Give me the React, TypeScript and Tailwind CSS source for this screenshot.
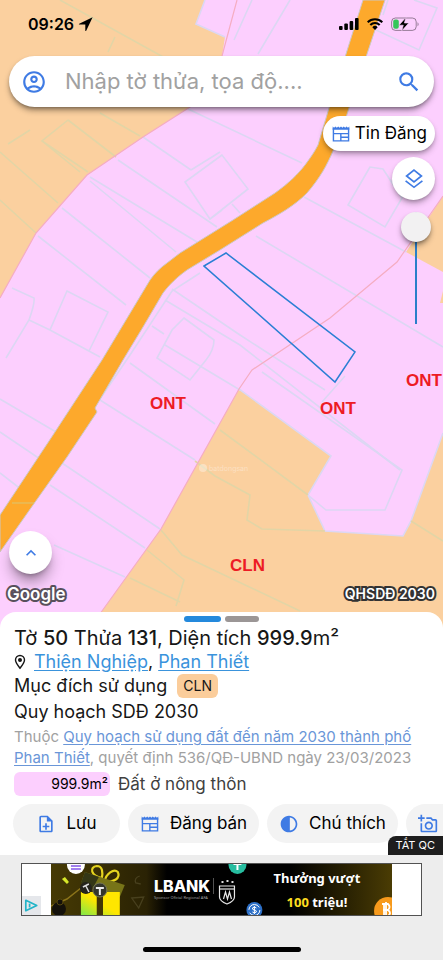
import { useState } from "react";
import {
  MdContrast,
  MdKeyboardArrowUp,
  MdOutlineAccountCircle,
  MdOutlineAddAPhoto,
  MdOutlineNoteAdd,
  MdSearch,
} from "react-icons/md";

function NewsIcon({ className }: { className?: string }) {
  return (
    <svg className={className} viewBox="0 0 24 24" fill="none" stroke="currentColor" strokeWidth={1.7} aria-hidden="true">
      <path
        d="M2 3l1.67 1.5L5.33 3 7 4.5 8.67 3l1.66 1.5L12 3l1.67 1.500L15.33 3 17 4.500 18.670 3l1.660 1.500L22 3v4H2z"
        fill="currentColor"
        stroke="none"
      />
      <path d="M2.900 5v15.200h18.200V5M3 11.500h18M11.800 11.500V20M11.800 15.800H21" />
    </svg>
  );
}

function LayersIcon() {
  return (
    <svg className="size-6" viewBox="0 0 24 24" fill="none" stroke="currentColor" strokeWidth={1.7} aria-hidden="true">
      <path d="M12 3.200l7.400 5.800-7.400 5.800L4.600 9z" />
      <path d="M3.600 13.800l8.400 6.500 8.400-6.500" />
    </svg>
  );
}

function StatusBar() {
  return (
    <div className="flex items-center justify-between pt-3 pr-6 pl-7">
      <div className="flex items-center gap-1 text-base font-semibold text-black">
        <span>09:26</span>
        <svg className="size-4" viewBox="0 0 16 16" aria-label="Location">
          <path d="M14.6 1.2L1.2 7.8c-.5.3-.4.8.2.8h5.9v6c0 .6.6.7.9.2z" />
        </svg>
      </div>
      <div className="flex items-center gap-2">
        <svg className="h-3 w-5" viewBox="0 0 20 12" aria-label="Signal">
          <rect x="0" y="8" width="3.6" height="4" rx="1" />
          <rect x="5.3" y="5.6" width="3.6" height="6.4" rx="1" />
          <rect x="10.6" y="3" width="3.6" height="9" rx="1" />
          <rect x="16" y="0" width="3.6" height="12" rx="1" />
        </svg>
        <svg className="h-3 w-4" viewBox="0 0 16 12" aria-label="Wi-Fi">
          <g fill="none" stroke="#000" strokeWidth="2">
            <path d="M.7 4.3a10.4 10.4 0 0 1 14.6 0" />
            <path d="M3.3 7a6.6 6.6 0 0 1 9.4 0" />
          </g>
          <path d="M8 12L5.3 9.2a3.8 3.8 0 0 1 5.4 0z" />
        </svg>
        <svg className="h-4 w-7" viewBox="0 0 28 16" aria-label="Battery">
          <rect x=".6" y="2" width="24.6" height="12.4" rx="3.8" fill="none" stroke="#000" strokeOpacity=".4" />
          <path d="M26.6 6.2c1.2.5 1.2 3.5 0 4z" fillOpacity=".5" />
          <rect x="2.2" y="3.6" width="5.6" height="9.2" rx="2" fill="#34c759" />
          <path d="M14.8 1.6L8 9.2h4.3l-1.5 5.6 7-7.8h-4.4z" stroke="#fcd0fe" strokeWidth=".6" />
        </svg>
      </div>
    </div>
  );
}

function ParcelMap() {
  return (
    <svg
      className="absolute inset-0 size-full"
      viewBox="0 0 443 628"
      preserveAspectRatio="xMidYMin slice"
      role="img"
      aria-label="QHSDĐ 2030"
    >
      <rect width="443" height="628" fill="#fccffe" />

      {/* CLN zones */}
      <g fill="#fbd09f">
        <path d="M0 0H205L196 24 225 37 222 56 190 107 143 137 87 175 36 233 0 298Z" />
        <path d="M239 389L331 456 308 495 325 531 403 536 411 521 443 433V628H90L102 611 161 529Z" />
        <path d="M443 196L406 252 443 272Z" />
        <path d="M443 291L440 303H443Z" />
      </g>

      {/* parcel borders over the pink zone */}
      <g fill="none" stroke="#dcd7f3" strokeWidth="1.6">
        <path d="M205 0L196 24 225 37" />
        <path d="M252 0L234 40M290 0L258 54M388 0L383 15M376 30L419 50 437 8 414 0" />
        <path d="M188 109L302 163M143 137L191 170M118 160L217 227M90 177L197 242M90 181L176 252M62 208L150 278M38 236L126 305" />
        <path d="M222 155L185 182 210 219 248 189Z M191 170L220 152M210 219L222 210M232 204L240 213" />
        <path d="M12 288L34 298Q35 303 29 320L6 358M29 320L50 330 100 357M67 291L108 312 89 351 50 330ZM0 399L56 432M0 432L40 459M0 473L22 490" />
        <path d="M370 167L348 205 385 227 402 198 383 169ZM304 197L406 252M256 236L443 347" />
        <path d="M172 289L240 335 325 390M165 300L240 345 400 470" />
        <path d="M184 318L214 340Q214 350 206 360L190 380 157 358 172 330ZM152 326L164 334M130 363L215 424M165 345L240 390" />
        <path d="M200 273L172 291 130 355 98 402 14 522M100 400L195 460M62 463L160 529M50 485L145 548M54 545L125 577" />
        <path d="M262 372L402 470 385 510H326L308 495 331 456 239 389M345 376L322 402M308 495L325 531 403 536 411 521 443 433" />
      </g>

      {/* parcel borders over the orange zone */}
      <g fill="none" stroke="#e2d5a6" strokeWidth="1.6">
        <path d="M60 0L165 58M68 120L42 141 88 172M8 144L30 130M115 37L108 52M42 141L80 172M68 120L116 157M0 152L58 203M100 113L140 136M0 200L36 233" />
        <path d="M220 430L308 495M195 461L215 476 250 495 247 520 262 529 325 531M161 530L182 555 300 611M147 550L184 580 176 606M411 521L443 541M130 578L180 602" />
      </g>

      {/* zone outline */}
      <g fill="none" stroke="#f5adc2" strokeWidth="1.2">
        <path d="M237 0L222 56 190 107 143 137 87 175 36 233 0 298" />
        <path d="M443 196L397 262 330 318 252 370 239 389 161 529 102 611 90 628" />
      </g>

      {/* road */}
      <path
        d="M363 0H385L349 108C344 124 340 137 333 151C327 165 320 178 307 193C294 206 280 214 263 223L220 250 187 270C177 277 169 285 163 293L143 327 123 360 95 408 97 412 67 457 33 505 0 552V515L53 435 102 360 150 280C155 273 160 268 167 263L180 253 233 220 275 193C289 183 298 174 305 165C311 157 315 151 318 145L329 108Z"
        fill="#fda92c"
        stroke="#ccc8c4"
        strokeWidth="1"
      />
      <path d="M12 503H34" stroke="#d9c672" />

      <path d="M204 266L226 253 355 352 335 382Z" fill="none" stroke="#2a7fd4" strokeWidth="1.5" />

      <g className="fill-[#ed1b24] font-['Liberation_Sans',sans-serif] text-[17px] font-bold">
        <text x="150" y="409">ONT</text>
        <text x="320" y="414">ONT</text>
        <text x="406" y="386">ONT</text>
        <text x="230" y="571">CLN</text>
      </g>

      <g opacity=".35" fill="#fff">
        <circle cx="203" cy="468" r="4" />
        <text x="209" y="471" className="font-['Inter',sans-serif] text-[7px]">batdongsan</text>
      </g>
    </svg>
  );
}

function AdBanner() {
  return (
    <a href="#" className="flex h-[53px] border border-neutral-600 bg-white" aria-label="LBANK">
      <span className="flex w-[29px] shrink-0 items-end">
        <svg className="size-[19px] bg-gray-200" viewBox="0 0 20 20" fill="none" stroke="#22b4c8" strokeWidth="1.8" aria-hidden="true">
          <path d="M4 4.5v11L15.5 10z" strokeLinejoin="round" />
          <path d="M8 8v4" />
        </svg>
      </span>
      <span className="relative flex min-w-0 flex-1 overflow-hidden bg-black">
        <svg className="absolute inset-0 size-full" viewBox="0 0 342 51" preserveAspectRatio="none" aria-hidden="true">
          <defs>
            <linearGradient id="glow">
              <stop offset="0" stopColor="#463a04" />
              <stop offset=".28" stopColor="#2a2204" />
              <stop offset=".34" stopColor="#000" />
              <stop offset=".7" stopColor="#000" />
              <stop offset="1" stopColor="#4a3c04" />
            </linearGradient>
            <linearGradient id="box" x1="0" y1="1" x2="1" y2="0">
              <stop offset="0" stopColor="#7fe84a" />
              <stop offset=".5" stopColor="#ffe600" />
            </linearGradient>
          </defs>
          <rect width="342" height="51" fill="url(#glow)" />
          <path d="M0 42L16 35 30 24" stroke="#8b741a" strokeWidth="1.5" fill="none" />
          <circle cx="8" cy="45" r="7" fill="#14110a" />
          <circle cx="9" cy="38" r="3" fill="#14110a" stroke="#55470e" />
          <path d="M11 15l3-2 4 5-2 2z" fill="#d7e829" />
          <circle cx="25" cy="1" r="9" fill="#fff" />
          <path d="M20-1h10M20 2h10M20 5h10" stroke="#8256e8" strokeWidth="1.6" />
          <g fill="none" stroke="#e5d420" strokeWidth="2.2">
            <path d="M51 14C40 12 38 3 46 2c6 0 6 7 5 12" />
            <path d="M54 17c1-7 9-13 13-9 3 6-4 11-13 9" />
          </g>
          <path d="M34 8L74 21 69 33 30 19Z" fill="#777418" />
          <path d="M30 19L34 8 48 13 42 24Z" fill="#343716" />
          <path d="M30 28h16v23H30zM52 28h17v23H52z" fill="url(#box)" />
          <path d="M46 28h6v23h-6z" fill="#433505" />
          <circle cx="35" cy="24" r="6" fill="#24231c" />
          <path d="M32 23l6-3M35 22l3 6" stroke="#ddd" strokeWidth="1.5" />
          <circle cx="49" cy="26" r="7" fill="#34362c" stroke="#767755" />
          <path d="M45 24h8M49 24v7" stroke="#eee" strokeWidth="2" />
          <path d="M89 12q-6 2-4 7l5 1M81 34l12-1-5 11z" fill="none" stroke="#48401e" strokeWidth="1.3" />
          <g fill="none" stroke="#e8e8e8" strokeWidth="1.2">
            <path d="M169 22h15v11q0 4-7.5 7-7.5-3-7.5-7z" />
            <path d="M169 25h15" />
            <path d="M173 35l2-7 2 7 2-7 2 7" />
          </g>
          <path d="M171 17h2v2h-2zM176 16h2v2h-2zM181 17h2v2h-2z" fill="#ddd" />
          <circle cx="187" cy="1" r="9" fill="#27bda0" />
          <path d="M183 0h8M187 0v6" stroke="#fff" strokeWidth="2" />
          <circle cx="204" cy="46" r="8" fill="#2c6fc7" />
          <circle cx="204" cy="46" r="5.5" fill="none" stroke="#fff" strokeDasharray="14 3" />
          <path d="M206 44q-2-2-4 0 0 2 2 2t2 2q-2 2-4 0M204 42v8" stroke="#fff" fill="none" />
          <circle cx="338" cy="47" r="14" fill="#f79a1c" />
          <path d="M334 40v12M332 40h6q3 3 0 6h-5M338 46q4 3 0 6h-6M336 38v16" stroke="#fff" strokeWidth="1.8" fill="none" />
        </svg>
        <span className="relative flex w-full items-center pl-[103px] font-['Noto_Sans',sans-serif] text-white">
          <span className="flex w-16 shrink-0 flex-col">
            <span className="w-[60px] border-r border-neutral-600 font-['Inter',sans-serif] text-base leading-4 font-extrabold">
              LBANK
            </span>
            <span className="text-[4px] leading-2 whitespace-nowrap text-neutral-400">Sponsor Oficial Regional AFA</span>
          </span>
          <span className="flex-1 pl-6 text-center text-[13px] leading-6 font-bold">
            Thưởng vượt
            <br />
            <span className="text-yellow-300">100</span> triệu!
          </span>
        </span>
      </span>
      <span className="w-[29px] shrink-0" />
    </a>
  );
}

const actions = [
  { label: "Lưu", icon: <MdOutlineNoteAdd className="size-5" />, width: "w-[107px]" },
  { label: "Đăng bán", icon: <NewsIcon className="size-5" />, width: "w-[131px]" },
  { label: "Chú thích", icon: <MdContrast className="size-5" />, width: "w-[131px]" },
  { label: "", icon: <MdOutlineAddAPhoto className="size-5 shrink-0" />, width: "w-[131px]" },
];

export default function App() {
  const [query, setQuery] = useState("");
  const [opacity, setOpacity] = useState(100);

  return (
    <div className="flex min-h-screen flex-col overflow-x-hidden bg-[#ededed] font-['Inter',sans-serif] text-neutral-900">
      <section className="relative flex flex-1 flex-col pb-4">
        <ParcelMap />
        <div className="relative flex flex-1 flex-col">
          <StatusBar />
          <form
            className="mx-[9px] mt-5 flex h-[51px] items-center gap-[18px] rounded-full bg-white px-3 shadow-md shadow-black/40"
            onSubmit={(e) => e.preventDefault()}
          >
            <button type="button" aria-label="Account" className="text-[#3f7be4]">
              <MdOutlineAccountCircle className="size-[26px]" />
            </button>
            <input
              type="text"
              aria-label="Nhập tờ thửa, tọa độ"
              value={query}
              onChange={(e) => setQuery(e.target.value)}
              placeholder="Nhập tờ thửa, tọa độ...."
              className="min-w-0 flex-1 text-[22px] outline-none placeholder:text-neutral-400"
            />
            <button type="submit" aria-label="Search" className="text-[#3f7be4]">
              <MdSearch className="size-[26px]" />
            </button>
          </form>

          <div className="mt-[9px] flex flex-col items-end pr-2">
            <button className="flex h-[35px] items-center gap-1 rounded-full bg-white px-2 text-[17px] text-black shadow-md shadow-black/30">
              <NewsIcon className="size-5 text-[#3f7be4]" />
              Tin Đăng
            </button>
            <button
              aria-label="Layers"
              className="mt-1.5 flex size-[43px] items-center justify-center rounded-full bg-white text-[#3f7be4] shadow-md shadow-black/30"
            >
              <LayersIcon />
            </button>
            <div className="mt-3 mr-1 flex w-[31px] justify-center">
              <input
                type="range"
                aria-label="Opacity"
                value={opacity}
                onChange={(e) => setOpacity(Number(e.target.value))}
                className="h-28 w-[31px] appearance-none bg-[linear-gradient(#2a7fc9,#2a7fc9)] bg-[length:2px_100%] bg-center bg-no-repeat [direction:rtl] [writing-mode:vertical-lr] [&::-webkit-slider-thumb]:size-[30px] [&::-webkit-slider-thumb]:appearance-none [&::-webkit-slider-thumb]:rounded-full [&::-webkit-slider-thumb]:bg-[#f2f1f2] [&::-webkit-slider-thumb]:shadow-md [&::-webkit-slider-thumb]:shadow-black/40"
              />
            </div>
          </div>

          <div className="mt-auto flex flex-col gap-1.5 pb-1">
            <button
              aria-label="Expand"
              className="ml-[9px] flex size-[43px] items-center justify-center rounded-full bg-white text-[#3f7be4] shadow-lg shadow-black/40"
            >
              <MdKeyboardArrowUp className="size-5" />
            </button>
            <div className="flex items-center justify-between pr-2 pl-1">
              <svg className="h-7 w-[72px] overflow-visible" viewBox="0 0 72 28" aria-label="Google">
                <text
                  x="3"
                  y="20"
                  className="fill-white stroke-[#58505c] stroke-4 font-['Inter',sans-serif] text-[17px] font-semibold [paint-order:stroke] [stroke-linejoin:round]"
                >
                  Google
                </text>
              </svg>
              <span className="text-sm font-semibold text-white [-webkit-text-stroke:4px_#333] [paint-order:stroke_fill]">
                QHSDĐ 2030
              </span>
            </div>
          </div>
        </div>
      </section>

      <main className="relative -mt-4 rounded-t-2xl bg-white pt-1 pb-3">
        <div className="flex justify-center gap-1">
          <span className="h-1.5 w-[37px] rounded-full bg-[#2489dc]" />
          <span className="h-1.5 w-[34px] rounded-full bg-[#9b9696]" />
        </div>
        <div className="px-3.5">
          <h1 className="pt-1 text-xl leading-6">
            Tờ <b className="font-medium">50</b> Thửa <b className="font-medium">131</b>, Diện tích{" "}
            <b className="font-medium">999.9</b>m²
          </h1>
          <p className="flex items-center gap-2 text-lg leading-6">
            <svg className="h-4 w-3" viewBox="0 0 12 16" fill="none" stroke="currentColor" strokeWidth="1.4" aria-hidden="true">
              <path d="M6 14.2C3.5 11 1.5 8.5 1.5 6a4.500 4.500 0 0 1 9 0c0 2.500-2 5-4.500 8.200z" />
              <circle cx="6" cy="6" r="1.3" fill="currentColor" />
            </svg>
            <span>
              <a href="#" className="text-[#3a93dc] underline underline-offset-2">Thiện Nghiệp</a>,{" "}
              <a href="#" className="text-[#3a93dc] underline underline-offset-2">Phan Thiết</a>
            </span>
          </p>
          <p className="flex items-center gap-2.5 text-lg leading-6">
            Mục đích sử dụng
            <span className="rounded-md bg-[#fbcd9b] px-1.5 text-sm leading-6">CLN</span>
          </p>
          <h2 className="text-lg leading-7">Quy hoạch SDĐ 2030</h2>
          <p className="text-[15px] leading-[21px] text-neutral-400">
            Thuộc{" "}
            <a href="#" className="text-[#6a96d8] underline underline-offset-2">
              Quy hoạch sử dụng đất đến năm 2030 thành phố Phan Thiết
            </a>
            , quyết định 536/QĐ-UBND ngày 23/03/2023
          </p>
          <p className="mt-1 flex items-center gap-2 text-[17px] leading-6 text-neutral-700">
            <span className="w-24 rounded-md bg-[#fccffe] pr-0.5 text-right text-sm leading-6 text-black">999.9m²</span>
            Đất ở nông thôn
          </p>
        </div>
        <div className="mt-2 flex gap-2 overflow-hidden pl-[13px]">
          {actions.map((action, i) => (
            <button
              key={i}
              aria-label={action.label || "Chụp ảnh"}
              className={`flex h-[39px] shrink-0 items-center gap-2.5 rounded-full bg-[#f3f3f3] text-[17px] text-black ${action.width} ${action.label ? "justify-center" : "pl-3"}`}
            >
              <span className="text-[#3f7be4]">{action.icon}</span>
              {action.label}
            </button>
          ))}
        </div>
        <button className="absolute right-0 bottom-0 h-[19px] rounded-tl-lg bg-[#1e1e1e] px-2 text-[11px] text-white">
          TẮT QC
        </button>
      </main>

      <footer className="px-[21px] pt-2 pb-2">
        <AdBanner />
        <div className="mx-auto mt-[31px] h-[5px] w-[158px] rounded-full bg-black" />
      </footer>
    </div>
  );
}
